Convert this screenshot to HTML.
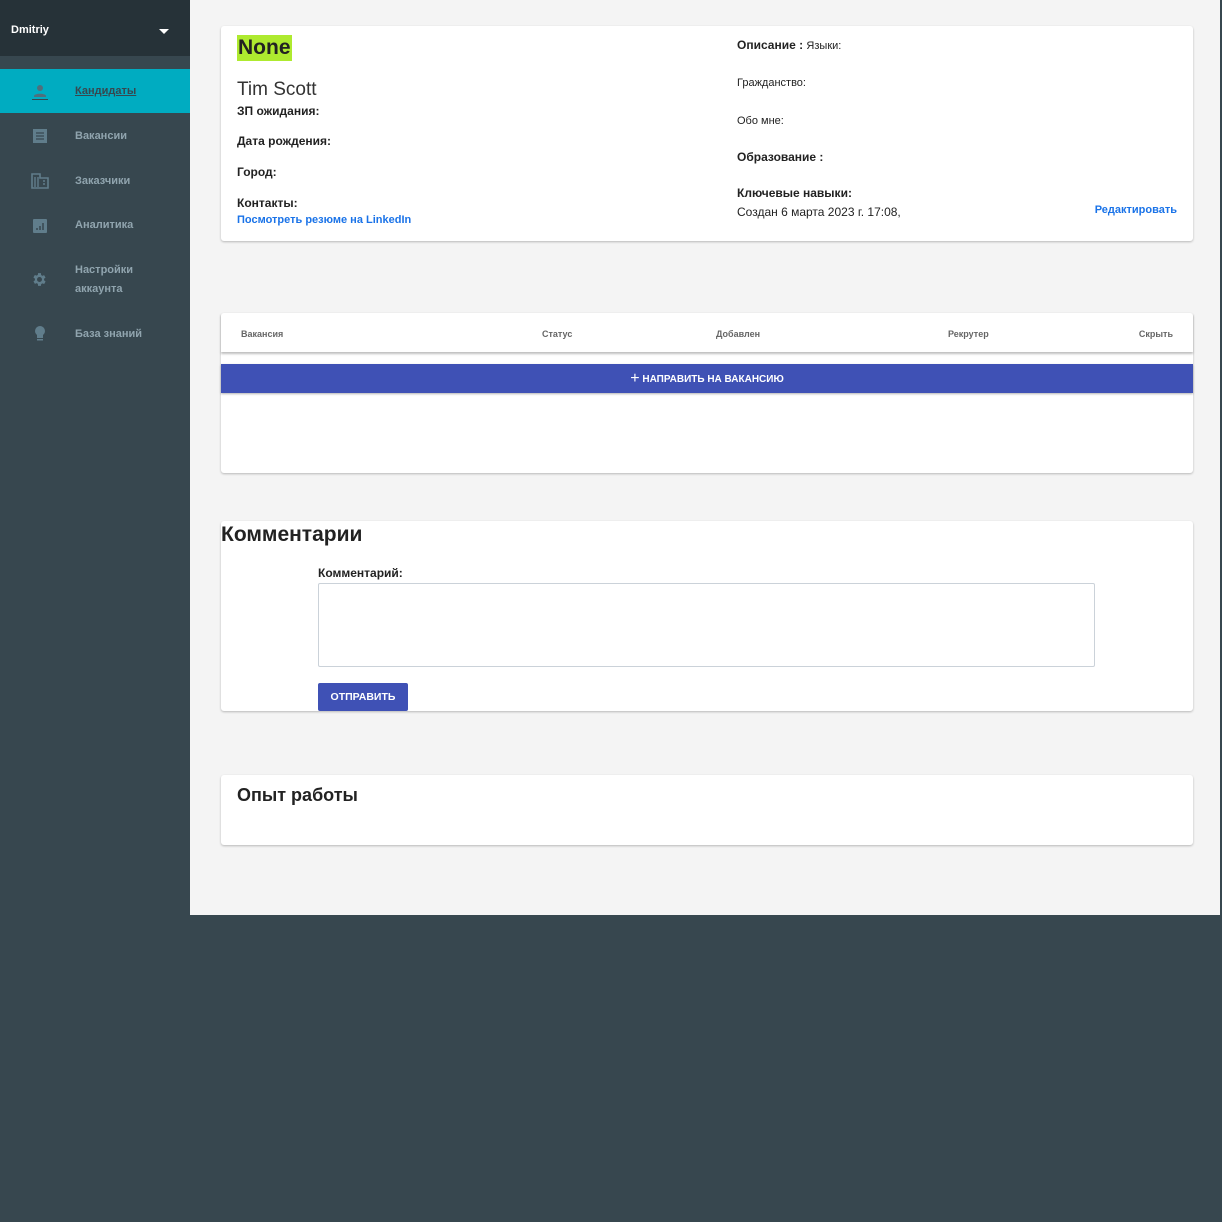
<!DOCTYPE html>
<html><head><meta charset="utf-8"><style>
*{box-sizing:border-box;margin:0;padding:0}
body{width:1222px;height:1222px;background:#37474f;font-family:"Liberation Sans",sans-serif;position:relative;overflow:hidden;color:#222}
.top{position:absolute;left:0;top:0;width:190px;height:56px;background:#263238;color:#fff;font-size:11px;font-weight:bold}
.top span{position:absolute;left:11px;top:24px}
.caret{position:absolute;left:159px;top:29px;width:0;height:0;border-left:5px solid transparent;border-right:5px solid transparent;border-top:5px solid #fff}
.nav{position:absolute;left:0;width:190px;color:#90a4ae;font-size:11px;font-weight:bold}
.nav .t{position:absolute;left:75px;line-height:19px}
.nav svg{position:absolute;left:31px}
.act{background:#00acc1;top:69px;height:44px}
.main{position:absolute;left:190px;top:0;width:1030px;height:915px;background:#f4f4f4}
.card{position:absolute;left:31px;width:972px;background:#fff;border-radius:3px;box-shadow:0 1px 2px rgba(0,0,0,.25)}
.b{font-weight:bold;font-size:12px;position:absolute}
.s{font-size:11px;position:absolute}
a{color:#1a73e8;text-decoration:none}
</style></head><body>
<div class="top"><span>Dmitriy</span><div class="caret"></div></div>
<div class="nav act" style="top:69px"><svg width="18" height="18" viewBox="0 0 18 18" style="top:13px"><circle cx="9" cy="6" r="3" fill="#4f6f7c"/><path d="M3 14c0-3 12-3 12 0v1H3z" fill="#4f6f7c"/><rect x="1" y="17" width="16" height="1" fill="#37474f"/></svg><span class="t" style="top:13px;color:#37474f;text-decoration:underline">Кандидаты</span></div>
<div class="nav" style="top:113px;height:45px"><svg width="16" height="16" viewBox="0 0 16 16" style="top:15px;left:32px"><rect x="1" y="1" width="14" height="14" fill="#607d8b"/><path d="M4 5h8M4 8h8M4 11h8" stroke="#37474f" stroke-width="1.3"/></svg><span class="t" style="top:14px">Вакансии</span></div>
<div class="nav" style="top:158px;height:45px"><svg width="18" height="16" viewBox="0 0 18 16" style="top:15px"><path d="M1 1h8v4h8v10H1z" fill="none" stroke="#607d8b" stroke-width="1.6"/><path d="M4 4v10M7 4v10M12 8h2M12 11h2" stroke="#607d8b" stroke-width="1.4"/></svg><span class="t" style="top:14px">Заказчики</span></div>
<div class="nav" style="top:203px;height:45px"><svg width="16" height="16" viewBox="0 0 16 16" style="top:15px;left:32px"><rect x="1" y="1" width="14" height="14" rx="1" fill="#607d8b"/><path d="M5 12v-2M8 12V8M11 12V5" stroke="#37474f" stroke-width="1.5"/></svg><span class="t" style="top:13px">Аналитика</span></div>
<div class="nav" style="top:258px;height:45px"><svg width="17" height="17" viewBox="0 0 24 24" style="top:13px"><path fill="#607d8b" d="M19.4 13a7.5 7.5 0 000-2l2.1-1.6-2-3.5-2.5 1a7 7 0 00-1.7-1L15 3h-4l-.4 2.6a7 7 0 00-1.7 1l-2.5-1-2 3.5L6.6 11a7.5 7.5 0 000 2l-2.1 1.6 2 3.5 2.5-1a7 7 0 001.7 1L11 21h4l.4-2.6a7 7 0 001.7-1l2.5 1 2-3.5zM13 15.5a3.5 3.5 0 110-7 3.5 3.5 0 010 7z" transform="translate(-1 0)"/></svg><span class="t" style="top:3px">Настройки<br>аккаунта</span></div>
<div class="nav" style="top:323px;height:22px"><svg width="16" height="18" viewBox="0 0 16 18" style="top:2px;left:32px"><circle cx="8" cy="6" r="5" fill="#607d8b"/><rect x="5" y="9" width="6" height="4" fill="#607d8b"/><rect x="5" y="14" width="6" height="1.5" fill="#607d8b"/></svg><span class="t" style="top:2px">База знаний</span></div>

<div class="main">
<div class="card" style="top:26px;height:215px">
 <div style="position:absolute;left:16px;top:9px;background:#aeea2f;font-size:21px;font-weight:bold;padding:0 1px;line-height:26px;color:#222">None</div>
 <div style="position:absolute;left:16px;top:53px;font-size:19px;color:#333;font-weight:300">Tim Scott</div>
 <div class="b" style="left:16px;top:78px">ЗП ожидания:</div>
 <div class="b" style="left:16px;top:108px">Дата рождения:</div>
 <div class="b" style="left:16px;top:139px">Город:</div>
 <div class="b" style="left:16px;top:170px">Контакты:</div>
 <div class="s" style="left:16px;top:188px;font-weight:bold"><a>Посмотреть резюме на LinkedIn</a></div>
 <div class="b" style="left:516px;top:12px">Описание : <span style="font-weight:normal;font-size:11px">Языки:</span></div>
 <div class="s" style="left:516px;top:51px">Гражданство:</div>
 <div class="s" style="left:516px;top:89px">Обо мне:</div>
 <div class="b" style="left:516px;top:124px">Образование :</div>
 <div class="b" style="left:516px;top:160px">Ключевые навыки:</div>
 <div style="position:absolute;left:516px;top:179px;font-size:12px">Создан 6 марта 2023 г. 17:08,</div>
 <div class="s" style="right:16px;top:178px;font-weight:bold"><a>Редактировать</a></div>
</div>
<div class="card" style="top:313px;height:160px">
 <div style="position:absolute;left:0;top:0;width:100%;height:39px;box-shadow:0 2px 2px rgba(0,0,0,.25);font-size:9px;font-weight:bold;color:#666">
  <span style="position:absolute;left:20px;top:16px">Вакансия</span>
  <span style="position:absolute;left:321px;top:16px">Статус</span>
  <span style="position:absolute;left:495px;top:16px">Добавлен</span>
  <span style="position:absolute;left:727px;top:16px">Рекрутер</span>
  <span style="position:absolute;right:20px;top:16px">Скрыть</span>
 </div>
 <div style="position:absolute;left:0;top:51px;width:100%;height:29px;background:#3f51b5;box-shadow:0 1px 2px rgba(0,0,0,.3);color:#fff;font-size:10px;font-weight:bold;text-align:center;line-height:29px"><span style="font-size:16px;font-weight:normal;vertical-align:-1px">+</span> НАПРАВИТЬ НА ВАКАНСИЮ</div>
</div>
<div class="card" style="top:521px;height:190px">
 <div style="position:absolute;left:0;top:2px;font-size:21px;font-weight:bold;color:#222">Комментарии</div>
 <div class="b" style="left:97px;top:45px">Комментарий:</div>
 <div style="position:absolute;left:97px;top:62px;width:777px;height:84px;border:1px solid #cbd2d9;border-radius:2px"></div>
 <div style="position:absolute;left:97px;top:162px;width:90px;height:28px;background:#3f51b5;border-radius:2px;color:#fff;font-size:10.5px;font-weight:bold;text-align:center;line-height:28px">ОТПРАВИТЬ</div>
</div>
<div class="card" style="top:775px;height:70px">
 <div style="position:absolute;left:16px;top:10px;font-size:18px;font-weight:bold;color:#222">Опыт работы</div>
</div>
</div>
</body></html>
